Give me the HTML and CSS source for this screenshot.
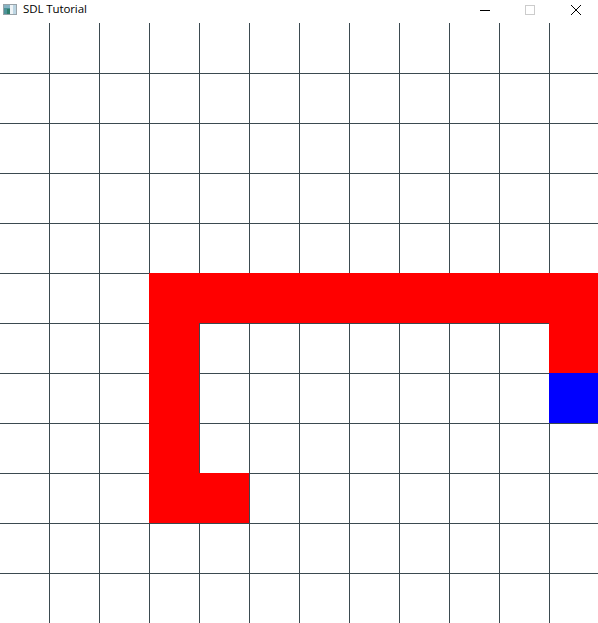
FILE: index.html
```html
<!DOCTYPE html>
<html lang="en">
<head>
<meta charset="utf-8">
<title>SDL Tutorial</title>
<link rel="stylesheet" href="styles.css">
</head>
<body>
<div class="window">
  <header class="titlebar">
    <svg class="app-icon" width="14" height="11" viewBox="0 0 14 11" aria-hidden="true">
      <rect x=".5" y=".5" width="13" height="10" fill="#eef3f6" stroke="#98a2a8"/>
      <rect x="1" y="1" width="6" height="9" fill="#4d9298"/>
      <rect x="1" y="1" width="6" height="3" fill="#86b4c4"/>
      <rect x="4" y="5" width="3" height="5" fill="#2f7f6c"/>
      <rect x="10" y="1" width="3" height="9" fill="#bcd5e2"/>
    </svg>
    <span class="title">SDL Tutorial</span>
    <div class="controls">
      <span class="control control-inset"><svg width="10" height="10" viewBox="0 0 10 10" aria-hidden="true"><path d="M0 5.5H10" stroke="#000"/></svg></span>
      <span class="control control-inset"><svg width="10" height="10" viewBox="0 0 10 10" aria-hidden="true"><rect x=".5" y=".5" width="9" height="9" fill="none" stroke="#ccc"/></svg></span>
      <span class="control"><svg width="10" height="10" viewBox="0 0 10 10" aria-hidden="true"><path d="M0 0L10 10M10 0L0 10" stroke="#000"/></svg></span>
    </div>
  </header>
  <main class="board">
    <div class="seg top"></div>
    <div class="seg left"></div>
    <div class="seg foot"></div>
    <div class="seg right"></div>
    <div class="head"></div>
  </main>
</div>
</body>
</html>
```
FILE: styles.css
```css
html, body {
  margin: 0;
  padding: 0;
  background: #fff;
}
.window {
  width: 598px;
  height: 623px;
  display: flex;
  flex-direction: column;
  overflow: hidden;
}
.titlebar {
  height: 23px;
  flex: none;
  display: flex;
  align-items: flex-start;
  background: #fff;
}
.app-icon {
  flex: none;
  margin: 4px 0 0 3px;
}
.title {
  margin: 1px 0 0 6px;
  font: 11.5px/16px "Open Sans", "Noto Sans", sans-serif;
  color: #000;
  letter-spacing: -.1px;
}
.controls {
  margin-left: auto;
  display: flex;
  align-self: stretch;
}
.control {
  box-sizing: border-box;
  width: 45px;
  display: flex;
  align-items: center;
  justify-content: center;
  padding-bottom: 3px;
}
.control-inset {
  padding-right: 1px;
}
.control svg {
  display: block;
}
.board {
  flex: 1;
  display: grid;
  grid-template-columns: 49px repeat(10, 50px) 49px;
  grid-template-rows: repeat(12, 50px);
  background-color: #fff;
  background-image:
    linear-gradient(to right, transparent 49px, #3b4a50 49px),
    linear-gradient(#fff, #fff),
    linear-gradient(to bottom, #3b4a50 1px, transparent 1px);
  background-size: 50px 100%, 100% 1px, 100% 50px;
  background-repeat: repeat-x, no-repeat, repeat-y;
}
.seg {
  background: #f00;
}
.top {
  grid-column: 4 / 13;
  grid-row: 6;
}
.left {
  grid-column: 4;
  grid-row: 7 / 11;
}
.foot {
  grid-column: 5;
  grid-row: 10;
}
.right {
  grid-column: 12;
  grid-row: 7;
}
.head {
  grid-column: 12;
  grid-row: 8;
  background: #00f;
}
```
